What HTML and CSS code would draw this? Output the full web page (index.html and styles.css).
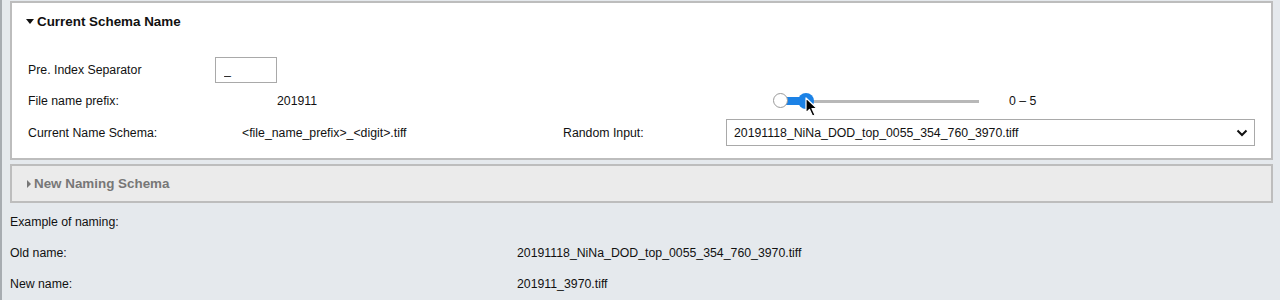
FILE: index.html
```html
<!DOCTYPE html>
<html lang="en">
<head>
    <meta charset="UTF-8">
    <title>Naming Schema</title>
    <link rel="stylesheet" href="styles.css">
</head>
<body>
    <div class="page">
        <div class="panel">
            <div class="panel-title"><span class="caret-down"></span>Current Schema Name</div>

            <div class="row row-sep">
                <span class="lbl-sep">Pre. Index Separator</span>
                <input type="text" class="sep-input" value="_">
            </div>

            <div class="row row-prefix">
                <span class="lbl-prefix">File name prefix:</span>
                <span class="val-prefix">201911</span>
                <div class="slider">
                    <div class="track"></div>
                    <div class="range"></div>
                    <div class="thumb thumb-min"></div>
                    <div class="thumb thumb-max"></div>
                    <svg class="cursor" width="14" height="20" viewBox="0 0 14 20">
                        <path d="M1 1 L1 16 L4.5 12.5 L7.5 19 L10 18 L7 11.5 L12 11.5 Z" fill="#000" stroke="#fff" stroke-width="1.2" stroke-linejoin="round"/>
                    </svg>
                </div>
                <span class="range-text">0 &ndash; 5</span>
            </div>

            <div class="row row-schema">
                <span class="lbl-schema">Current Name Schema:</span>
                <span class="val-schema">&lt;file_name_prefix&gt;_&lt;digit&gt;.tiff</span>
                <span class="lbl-random">Random Input:</span>
                <div class="select">
                    <span>20191118_NiNa_DOD_top_0055_354_760_3970.tiff</span>
                    <svg width="12" height="8" viewBox="0 0 12 8"><path d="M1.5 1.5 L6 6 L10.5 1.5" fill="none" stroke="#111" stroke-width="2"/></svg>
                </div>
            </div>
        </div>

        <div class="panel panel-closed">
            <div class="panel-title"><span class="caret-right"></span>New Naming Schema</div>
        </div>

        <div class="example">
            <div class="ex-row">Example of naming:</div>
            <div class="ex-row"><span class="ex-lbl">Old name:</span><span>20191118_NiNa_DOD_top_0055_354_760_3970.tiff</span></div>
            <div class="ex-row"><span class="ex-lbl">New name:</span><span>201911_3970.tiff</span></div>
        </div>
    </div>
</body>
</html>
```

FILE: styles.css
```css
body {
    margin: 0;
    background-color: #e5e9ed;
    font-family: "Liberation Sans", Arial, sans-serif;
    font-size: 12.3px;
    color: #111;
}
.page {
    border-left: 2px solid #a7acb1;
    padding: 1px 7px 0 8px;
    height: 299px;
}
.panel {
    background-color: #fff;
    border: 2px solid #bdbdbd;
    padding: 11px 16px 12px 16px;
}
.panel-title {
    font-weight: bold;
    font-size: 13.4px;
    line-height: 15px;
    display: flex;
    align-items: center;
    margin-left: -2px;
}
.caret-down {
    width: 0;
    height: 0;
    border-left: 4px solid transparent;
    border-right: 4px solid transparent;
    border-top: 5px solid #111;
    margin-right: 3px;
}
.caret-right {
    width: 0;
    height: 0;
    border-top: 4px solid transparent;
    border-bottom: 4px solid transparent;
    border-left: 4px solid #777;
    margin-right: 3px;
    margin-left: 1px;
}
.row {
    display: flex;
    align-items: center;
}
.row-sep {
    margin-top: 28px;
    height: 26px;
}
.lbl-sep {
    width: 187px;
}
.sep-input {
    width: 62px;
    height: 26px;
    box-sizing: border-box;
    border: 1px solid #a9a9a9;
    padding: 0 8px;
    font: inherit;
    color: #111;
}
.row-prefix {
    margin-top: 8px;
    height: 20px;
}
.lbl-prefix {
    width: 249px;
}
.val-prefix {
    width: 496px;
}
.slider {
    position: relative;
    width: 206px;
    height: 20px;
}
.track {
    position: absolute;
    left: 8px;
    right: 0;
    top: 9px;
    height: 3px;
    background-color: #b8b8b8;
}
.range {
    position: absolute;
    left: 8px;
    width: 25px;
    top: 6px;
    height: 8px;
    background-color: #1c82e6;
}
.thumb {
    position: absolute;
    top: 2px;
    width: 15px;
    height: 15px;
    border-radius: 50%;
    box-sizing: border-box;
}
.thumb-min {
    left: 0;
    background-color: #fff;
    border: 1px solid #9a9a9a;
}
.thumb-max {
    left: 25px;
    width: 16px;
    height: 16px;
    background-color: #1c82e6;
}
.cursor {
    position: absolute;
    left: 32px;
    top: 6px;
}
.range-text {
    margin-left: 30px;
}
.row-schema {
    margin-top: 8px;
    height: 27px;
}
.lbl-schema {
    width: 214px;
}
.val-schema {
    width: 321px;
}
.lbl-random {
    width: 163px;
}
.select {
    width: 529px;
    height: 27px;
    box-sizing: border-box;
    border: 1px solid #a9a9a9;
    display: flex;
    align-items: center;
    justify-content: space-between;
    padding: 0 6px 0 7px;
}
.panel-closed {
    margin-top: 4px;
    background-color: #ebebeb;
    color: #777;
    padding: 10px 16px 10px 16px;
}
.example {
    padding-top: 3px;
}
.ex-row {
    display: flex;
    height: 31px;
    align-items: center;
}
.ex-lbl {
    width: 507px;
}
```
